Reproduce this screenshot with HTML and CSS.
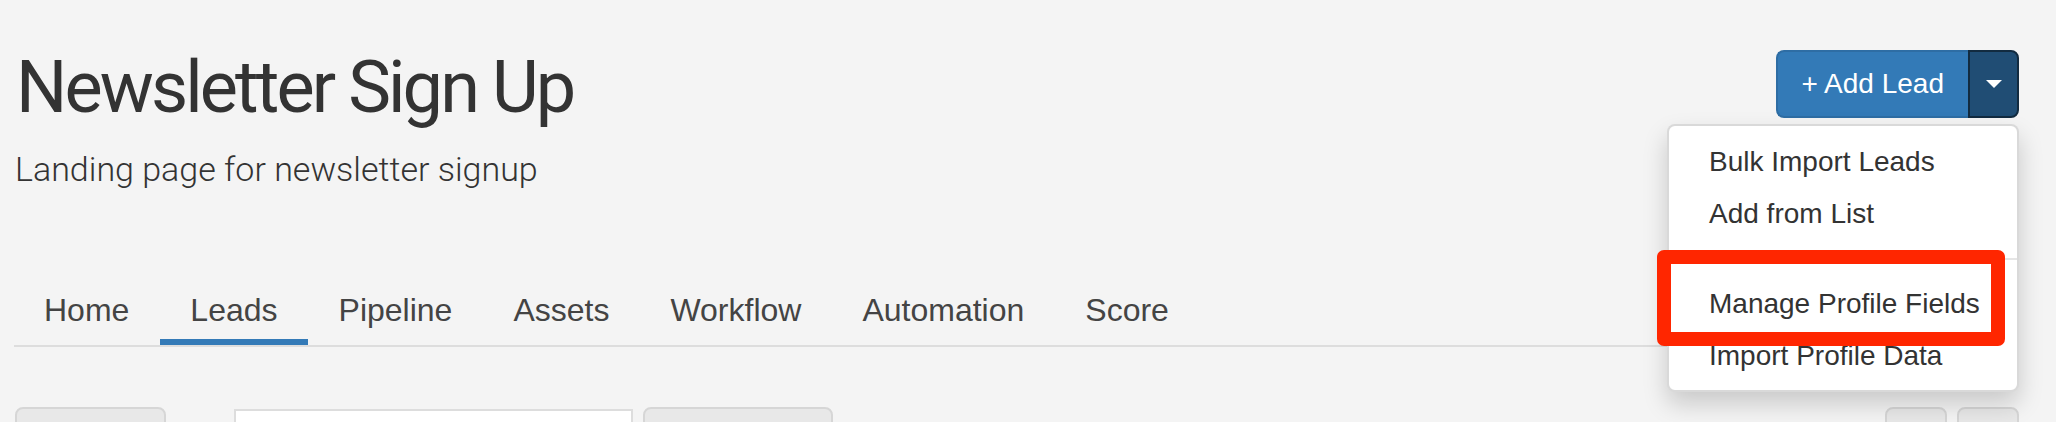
FILE: index.html
```html
<!DOCTYPE html>
<html lang="en">
<head>
<meta charset="utf-8">
<title>Newsletter Sign Up</title>
<link rel="stylesheet" href="styles.css">
</head>
<body>
<div class="page">
  <header class="head">
    <div class="titles">
      <h1 class="title">Newsletter Sign Up</h1>
      <p class="subtitle">Landing page for newsletter signup</p>
    </div>
    <div class="actions">
      <div class="btn-group">
        <button class="btn-main" type="button">+ Add Lead</button>
        <button class="btn-caret" type="button"><span class="caret"></span></button>
      </div>
      <ul class="menu">
        <li><a class="menu-link">Bulk Import Leads</a></li>
        <li><a class="menu-link">Add from List</a></li>
        <li class="divider"></li>
        <li><a class="menu-link">Manage Profile Fields</a></li>
        <li><a class="menu-link">Import Profile Data</a></li>
        <li class="highlight"></li>
      </ul>
    </div>
  </header>

  <ul class="tabs">
    <li class="tab-item"><a class="tab">Home</a></li>
    <li class="tab-item"><a class="tab active">Leads</a></li>
    <li class="tab-item"><a class="tab">Pipeline</a></li>
    <li class="tab-item"><a class="tab">Assets</a></li>
    <li class="tab-item"><a class="tab">Workflow</a></li>
    <li class="tab-item"><a class="tab">Automation</a></li>
    <li class="tab-item"><a class="tab">Score</a></li>
  </ul>

  <div class="toolbar">
    <div class="tb-left">
      <span class="tb-btn tb-w1"></span>
      <span class="tb-input"></span>
      <span class="tb-btn tb-w2"></span>
    </div>
    <div class="tb-right">
      <span class="tb-btn tb-sq"></span>
      <span class="tb-btn tb-sq"></span>
    </div>
  </div>
</div>
</body>
</html>
```

FILE: styles.css
```css
html, body {
  margin: 0;
  padding: 0;
  overflow: hidden;
}

body {
  width: 2056px;
  height: 422px;
  background: #f4f4f4;
  color: #333;
  font-family: "Liberation Sans", Arial, sans-serif;
}

.page {
  padding: 50px 37px 0 14px;
}

/* ---------- header ---------- */
.head {
  display: flex;
  justify-content: space-between;
  align-items: flex-start;
}

.title {
  margin: 2px 0 0 2px;
  font-family: Roboto, "Open Sans", sans-serif;
  font-weight: 400;
  font-size: 72px;
  line-height: 72px;
  letter-spacing: -2.9px;
  color: #333;
}

.subtitle {
  margin: 28px 0 0 1px;
  font-family: Roboto, "Liberation Sans", sans-serif;
  font-weight: 300;
  font-size: 34px;
  line-height: 34px;
  color: #333;
}

.actions {
  position: relative;
}

.btn-group {
  display: flex;
}

.btn-main {
  height: 68px;
  padding: 0 24px;
  font-family: "Liberation Sans", Arial, sans-serif;
  font-size: 28px;
  color: #fff;
  background: #337ab7;
  border: 2px solid #2e6da4;
  border-right: none;
  border-radius: 8px 0 0 8px;
}

.btn-caret {
  width: 51px;
  height: 68px;
  padding: 0;
  display: flex;
  align-items: center;
  justify-content: center;
  background: #204d74;
  border: 2px solid #122b40;
  border-radius: 0 8px 8px 0;
}

.caret {
  width: 0;
  height: 0;
  border-top: 8px solid #fff;
  border-left: 8px solid transparent;
  border-right: 8px solid transparent;
}

/* ---------- dropdown ---------- */
.menu {
  position: absolute;
  right: 0;
  top: calc(100% + 6px);
  width: 352px;
  box-sizing: border-box;
  margin: 0;
  padding: 10px 0 8px;
  list-style: none;
  background: #fff;
  border: 2px solid rgba(0, 0, 0, 0.15);
  border-radius: 8px;
  box-shadow: 0 12px 24px rgba(0, 0, 0, 0.175);
  z-index: 10;
}

.menu-link {
  display: block;
  padding: 6px 40px;
  font-size: 28px;
  line-height: 40px;
  color: #333;
  white-space: nowrap;
}

.divider {
  height: 2px;
  margin: 18px 0;
  background: #e5e5e5;
}

.highlight {
  position: absolute;
  left: -12px;
  top: 124px;
  width: 348px;
  height: 96px;
  box-sizing: border-box;
  border: 14px solid #ff2600;
  border-radius: 7px;
}

/* ---------- tabs ---------- */
.tabs {
  display: flex;
  margin: 85px 0 0;
  padding: 0;
  list-style: none;
  border-bottom: 2px solid #ddd;
}

.tab-item {
  margin-right: 1px;
}

.tab {
  display: block;
  padding: 19px 30px 9px;
  font-size: 32px;
  line-height: 40px;
  color: #444;
  border-bottom: 6px solid transparent;
}

.tab.active {
  border-bottom-color: #337ab7;
}

/* ---------- toolbar ---------- */
.toolbar {
  display: flex;
  justify-content: space-between;
  margin-top: 60px;
}

.tb-left,
.tb-right {
  display: flex;
  gap: 10px;
  align-items: flex-start;
}

.tb-left {
  margin-left: 1px;
}

.tb-btn {
  display: block;
  height: 68px;
  box-sizing: border-box;
  background: #e8e8e8;
  border: 2px solid #d6d6d6;
  border-radius: 8px;
}

.tb-w1 { width: 151px; }
.tb-w2 { width: 190px; }
.tb-sq { width: 62px; }

.tb-input {
  display: block;
  width: 399px;
  height: 64px;
  margin: 2px 0 0 58px;
  box-sizing: border-box;
  background: #fff;
  border: 2px solid #ddd;
}
```
